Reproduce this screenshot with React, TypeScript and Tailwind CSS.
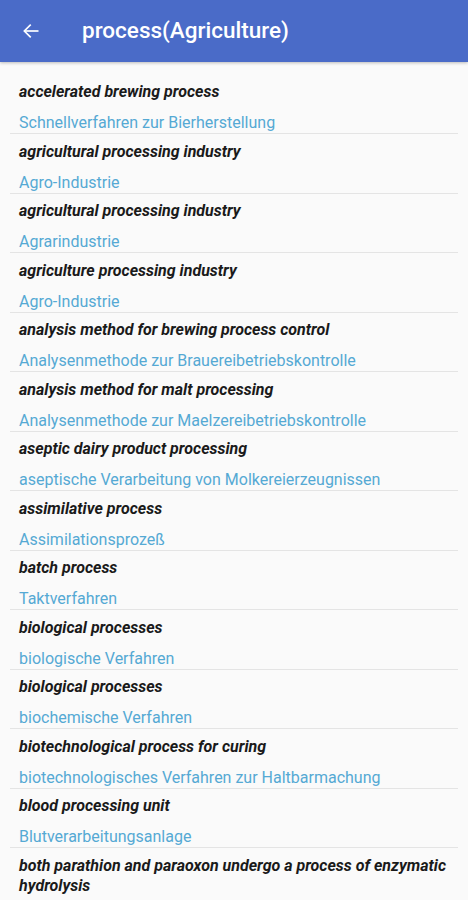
import React from "react";

const rows: [string, string][] = [
  ["accelerated brewing process", "Schnellverfahren zur Bierherstellung"],
  ["agricultural processing industry", "Agro-Industrie"],
  ["agricultural processing industry", "Agrarindustrie"],
  ["agriculture processing industry", "Agro-Industrie"],
  ["analysis method for brewing process control", "Analysenmethode zur Brauereibetriebskontrolle"],
  ["analysis method for malt processing", "Analysenmethode zur Maelzereibetriebskontrolle"],
  ["aseptic dairy product processing", "aseptische Verarbeitung von Molkereierzeugnissen"],
  ["assimilative process", "Assimilationsprozeß"],
  ["batch process", "Taktverfahren"],
  ["biological processes", "biologische Verfahren"],
  ["biological processes", "biochemische Verfahren"],
  ["biotechnological process for curing", "biotechnologisches Verfahren zur Haltbarmachung"],
  ["blood processing unit", "Blutverarbeitungsanlage"],
  ["both parathion and paraoxon undergo a process of enzymatic hydrolysis", ""],
];

export default function App() {
  return (
    <div className="w-[468px] h-[900px] overflow-hidden bg-[#fafafa]" style={{ fontFamily: "Roboto, 'Noto Sans', sans-serif" }}>
      <div className="h-[62px] bg-[#4a6bc8] flex items-center shadow-[0_1px_3px_rgba(0,0,0,0.25)] relative z-10">
        <div className="w-[82px] flex items-center pl-[21px]">
          <svg width="20" height="20" viewBox="0 0 24 24" fill="none" stroke="white" strokeWidth="2" strokeLinecap="square">
            <path d="M20 12H5" />
            <path d="M11 5l-7 7 7 7" strokeLinejoin="miter" />
          </svg>
        </div>
        <div className="text-white text-[22.5px] font-medium">process(Agriculture)</div>
      </div>
      <div className="pt-[12.5px]">
        {rows.map(([en, de], i) => (
          <div key={i} className="mx-[10px] border-b border-[#e4e4e4] pl-[9px] pr-[4px] pt-[7.5px] h-[59.5px]">
            <div className="text-[16px] leading-[20px] font-bold italic text-[#1a1a1a]">{en}</div>
            {de && (
              <div className="mt-[11px] text-[16px] leading-[20px] text-[#55a9d4]">{de}</div>
            )}
          </div>
        ))}
      </div>
    </div>
  );
}
